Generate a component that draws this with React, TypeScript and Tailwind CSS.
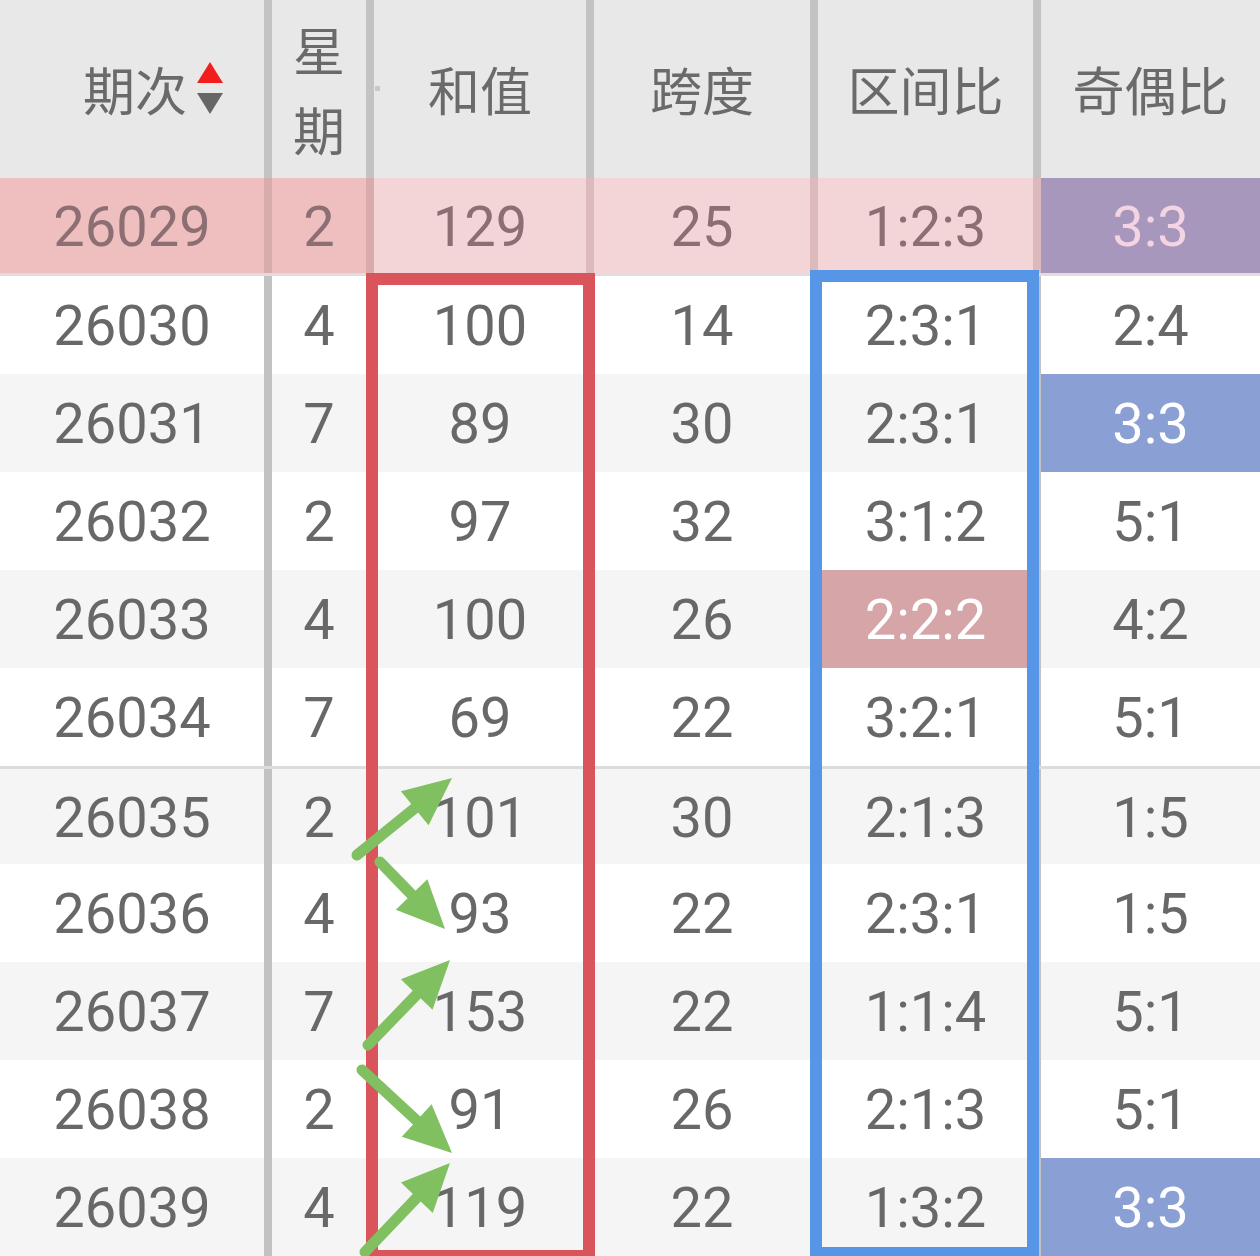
import React from 'react';

type Row = {
  no: string;
  wk: string;
  sum: string;
  span: string;
  zone: string;
  oe: string;
  zoneHot?: boolean;
  oeHot?: boolean;
  lineTop?: boolean;
};

const rows: Row[] = [
  { no: '26030', wk: '4', sum: '100', span: '14', zone: '2:3:1', oe: '2:4' },
  { no: '26031', wk: '7', sum: '89', span: '30', zone: '2:3:1', oe: '3:3', oeHot: true },
  { no: '26032', wk: '2', sum: '97', span: '32', zone: '3:1:2', oe: '5:1' },
  { no: '26033', wk: '4', sum: '100', span: '26', zone: '2:2:2', oe: '4:2', zoneHot: true },
  { no: '26034', wk: '7', sum: '69', span: '22', zone: '3:2:1', oe: '5:1' },
  { no: '26035', wk: '2', sum: '101', span: '30', zone: '2:1:3', oe: '1:5', lineTop: true },
  { no: '26036', wk: '4', sum: '93', span: '22', zone: '2:3:1', oe: '1:5' },
  { no: '26037', wk: '7', sum: '153', span: '22', zone: '1:1:4', oe: '5:1' },
  { no: '26038', wk: '2', sum: '91', span: '26', zone: '2:1:3', oe: '5:1' },
  { no: '26039', wk: '4', sum: '119', span: '22', zone: '1:3:2', oe: '3:3', oeHot: true },
];

// tail -> tip, all in page pixels
const arrows = [
  [357, 855, 452, 778],
  [380, 862, 445, 929],
  [368, 1045, 450, 960],
  [362, 1070, 452, 1153],
  [365, 1252, 450, 1163],
];

const grid = 'grid grid-cols-[272px_102px_220px_224px_223px_219px]';
const num = "font-['Roboto',sans-serif] text-[56px] leading-none translate-y-[1px]";
const cjk = "font-['Noto_Sans_CJK_SC',sans-serif] text-[52px] leading-none text-[#6a6a6a]";

function Arrow({ a }: { a: number[] }) {
  const [x1, y1, x2, y2] = a;
  const dx = x2 - x1;
  const dy = y2 - y1;
  const len = Math.hypot(dx, dy);
  const ux = dx / len;
  const uy = dy / len;
  const hl = 48;
  const hw = 22;
  const bx = x2 - ux * hl;
  const by = y2 - uy * hl;
  const pts = `${x2},${y2} ${bx - uy * hw},${by + ux * hw} ${bx + uy * hw},${by - ux * hw}`;
  return (
    <g>
      <line x1={x1} y1={y1} x2={bx + ux * 4} y2={by + uy * 4} stroke="#80c061" strokeWidth={11} strokeLinecap="round" />
      <polygon points={pts} fill="#80c061" />
    </g>
  );
}

function SortIcon() {
  return (
    <svg width="26" height="54" viewBox="0 0 26 54" className="ml-[10px]">
      <polygon points="13,0 26,21 0,21" fill="#f21d1d" />
      <polygon points="0,31 26,31 13,52" fill="#666666" />
    </svg>
  );
}

export default function App() {
  return (
    <div className="relative w-[1260px] h-[1256px] overflow-hidden bg-white">
      {/* Header */}
      <div className={`${grid} h-[178px] bg-[#e8e8e8]`}>
        <div className="flex items-center justify-end pr-[41px] border-r-[8px] border-[#c3c3c3]">
          <span className={cjk}>期次</span>
          <SortIcon />
        </div>
        <div className="relative flex flex-col items-center justify-center gap-[28px] border-r-[8px] border-[#c3c3c3]">
          <span className={cjk}>星</span>
          <span className={cjk}>期</span>
          <span className="absolute right-[-14px] top-[86px] w-[5px] h-[5px] bg-[#c8c8c8]" />
        </div>
        <div className="flex items-center justify-center border-r-[8px] border-[#c3c3c3]">
          <span className={cjk}>和值</span>
        </div>
        <div className="flex items-center justify-center border-r-[8px] border-[#c3c3c3]">
          <span className={cjk}>跨度</span>
        </div>
        <div className="flex items-center justify-center border-r-[8px] border-[#c3c3c3]">
          <span className={cjk}>区间比</span>
        </div>
        <div className="flex items-center justify-center">
          <span className={cjk}>奇偶比</span>
        </div>
      </div>

      {/* Latest draw, highlighted */}
      <div className={`${grid} h-[98px] border-b-[3px] border-[#dedede] text-[#8b6f73]`}>
        <div className="flex items-center justify-center bg-[#efbfc0] border-r-[8px] border-[#d8abad]">
          <span className={num}>26029</span>
        </div>
        <div className="flex items-center justify-center bg-[#efbfc0] border-r-[8px] border-[#d8abad]">
          <span className={num}>2</span>
        </div>
        <div className="flex items-center justify-center bg-[#f3d5d7] border-r-[8px] border-[#dcb9bb]">
          <span className={num}>129</span>
        </div>
        <div className="flex items-center justify-center bg-[#f3d5d7] border-r-[8px] border-[#dcb9bb]">
          <span className={num}>25</span>
        </div>
        <div className="flex items-center justify-center bg-[#f3d5d7] border-r-[8px] border-[#dcb9bb]">
          <span className={num}>1:2:3</span>
        </div>
        <div className="flex items-center justify-center bg-[#a797bd] text-[#f4d3e3]">
          <span className={num}>3:3</span>
        </div>
      </div>

      {/* Rows */}
      {rows.map((r, i) => (
        <div
          key={r.no}
          className={`${grid} h-[98px] text-[#686868] ${i % 2 === 1 ? 'bg-[#f5f5f5]' : 'bg-white'} ${r.lineTop ? 'border-t-[3px] border-[#dcdcdc]' : ''}`}
        >
          <div className="flex items-center justify-center border-r-[8px] border-[#c2c2c2]">
            <span className={num}>{r.no}</span>
          </div>
          <div className="flex items-center justify-center border-r-[8px] border-[#c2c2c2]">
            <span className={num}>{r.wk}</span>
          </div>
          <div className="flex items-center justify-center border-r-[8px] border-[#c2c2c2]">
            <span className={num}>{r.sum}</span>
          </div>
          <div className="flex items-center justify-center border-r-[8px] border-[#c2c2c2]">
            <span className={num}>{r.span}</span>
          </div>
          <div
            className={`flex items-center justify-center border-r-[8px] border-[#c2c2c2] ${r.zoneHot ? 'bg-[#d5a5a7] text-white' : ''}`}
          >
            <span className={num}>{r.zone}</span>
          </div>
          <div className={`flex items-center justify-center ${r.oeHot ? 'bg-[#8a9fd4] text-white' : ''}`}>
            <span className={num}>{r.oe}</span>
          </div>
        </div>
      ))}

      {/* Annotation boxes */}
      <div className="absolute left-[366px] top-[273px] w-[229px] h-[989px] border-[12px] border-[#d9555b] pointer-events-none" />
      <div className="absolute left-[810px] top-[270px] w-[229px] h-[989px] border-[12px] border-[#5795e6] pointer-events-none" />

      {/* Trend arrows */}
      <svg className="absolute left-0 top-0 pointer-events-none" width="1260" height="1256">
        {arrows.map((a, i) => (
          <Arrow key={i} a={a} />
        ))}
      </svg>
    </div>
  );
}
